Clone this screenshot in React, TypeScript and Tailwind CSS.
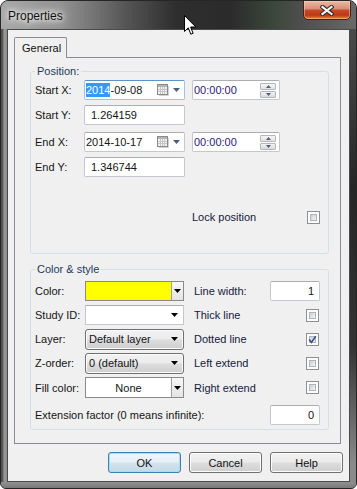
import React from "react";

function Tri({ color = "#000" }: { color?: string }) {
  return (
    <svg width="7" height="4" viewBox="0 0 7 4" className="block">
      <path d="M0 0H7L3.5 4Z" fill={color} />
    </svg>
  );
}

function SmallTri({ up, color = "#4c607a" }: { up?: boolean; color?: string }) {
  return (
    <svg width="5" height="3" viewBox="0 0 5 3" className="block">
      <path d={up ? "M0 3H5L2.5 0Z" : "M0 0H5L2.5 3Z"} fill={color} />
    </svg>
  );
}

function CalIcon() {
  return (
    <svg width="12" height="12" viewBox="0 0 12 12" className="block">
      <path d="M11.5 2V11.5H2" fill="none" stroke="#d2d2d2" />
      <rect x="0.5" y="0.5" width="10" height="10" fill="#f3f3f3" stroke="#8a8a8a" />
      <rect x="1" y="1" width="9" height="2" fill="#b4b4b4" />
      <path d="M3.5 3V10M5.5 3V10M7.5 3V10M1 5.5H10M1 7.5H10" stroke="#c6c6c6" />
    </svg>
  );
}

function CheckBox({ checked }: { checked?: boolean }) {
  return (
    <div className="relative w-[13px] h-[13px] shrink-0 border border-[#8e8f8f] bg-white p-[2px]">
      <div className="w-full h-full border border-[#aeb3b9] bg-[linear-gradient(135deg,#cdd1d6,#f4f4f4)]" />
      {checked && (
        <svg width="13" height="13" viewBox="0 0 13 13" className="absolute left-[-1px] top-[-1px]">
          <path d="M3.2 6.6L5.4 9.4L9.8 3.2" fill="none" stroke="#3b4f8c" strokeWidth="1.6" />
        </svg>
      )}
    </div>
  );
}

function Button({ children, def }: { children: React.ReactNode; def?: boolean }) {
  return (
    <div
      className={
        def
          ? "w-[73px] h-[21px] rounded-[3px] border border-[#3c7fb1] shadow-[inset_0_0_0_1px_#a9dcf6] bg-[linear-gradient(180deg,#f1f7fb_0%,#e6eff5_48%,#d3e3ee_52%,#c6d9e6_100%)] flex items-center justify-center text-[#111]"
          : "w-[73px] h-[21px] rounded-[3px] border border-[#707070] shadow-[inset_0_0_0_1px_#fcfcfc] bg-[linear-gradient(180deg,#f2f2f2_0%,#ebebeb_48%,#dddddd_52%,#cfcfcf_100%)] flex items-center justify-center text-[#111]"
      }
    >
      {children}
    </div>
  );
}

function Spinner() {
  return (
    <div className="w-[16px] h-[15px] flex flex-col gap-[1px] mr-[3px]">
      <div className="flex-1 rounded-[1px] border border-[#b4b7bb] bg-[linear-gradient(180deg,#f6f6f6,#e2e2e2)] flex items-center justify-center">
        <SmallTri up />
      </div>
      <div className="flex-1 rounded-[1px] border border-[#b4b7bb] bg-[linear-gradient(180deg,#f2f2f2,#dadada)] flex items-center justify-center">
        <SmallTri />
      </div>
    </div>
  );
}

const textBox =
  "h-[20px] bg-white border border-[#c3c7ce] border-t-[#abadb3] rounded-[2px] flex items-center";

export default function App() {
  return (
    <div className="w-[357px] h-[489px] relative flex flex-col overflow-hidden rounded-t-[8px] rounded-b-[6px] border border-[#262626] bg-[#7f7f7f] font-['Liberation_Sans',Arial,sans-serif] text-[11px] leading-[14px] text-[#141414]">
      {/* Title bar */}
      <div className="h-[28px] shrink-0 flex items-start bg-[linear-gradient(90deg,#a8a8a8_0px,#939393_60px,#555555_125px,#2e2e2e_175px,#2b2b2b_230px,#3b473b_272px,#4e4e4e_300px,#6a6a6a_357px)]">
        <span className="ml-[7px] mt-[7px] text-[12px] leading-[16px] text-[#111] [text-shadow:0_0_5px_#fff,0_0_9px_#fff,0_0_12px_#ddd]">
          Properties
        </span>
        <div className="ml-auto mr-[5px] -mt-[1px] w-[48px] h-[20px] rounded-b-[5px] border border-[#4a1e14] shadow-[inset_0_0_0_1px_rgba(255,220,200,0.45)] bg-[linear-gradient(180deg,#e9b8a6_0%,#d99178_42%,#c44b2c_52%,#bd3612_78%,#e38a2c_100%)] flex items-center justify-center">
          <svg width="14" height="11" viewBox="0 0 14 11" className="block">
            <path d="M2.5 2L11.5 9M11.5 2L2.5 9" stroke="#3a2a26" strokeWidth="4.2" strokeLinecap="square" />
            <path d="M2.5 2L11.5 9M11.5 2L2.5 9" stroke="#f4f4f4" strokeWidth="2.2" strokeLinecap="square" />
          </svg>
        </div>
      </div>

      {/* Middle */}
      <div className="flex-1 flex">
        <div className="w-[6px] bg-[linear-gradient(90deg,#4a4a4a_0px,#5e5e5e_2px,#9c9c9c_3px,#8a8a8a_6px)]" />
        <div className="w-[343px] border border-[#4b4b4b] bg-[#f0f0f0] flex flex-col">
          <div className="ml-[6px] mt-[7px] w-[327px] flex flex-col">
            {/* Tab header */}
            <div className="relative z-10 w-[53px] h-[21px] -mb-[1px] border border-b-0 border-[#898c95] rounded-t-[2px] bg-[#f0f0f0] flex items-center pl-[7px] text-[#111]">
              General
            </div>
            {/* Tab page */}
            <div className="h-[387px] border border-[#898c95] bg-[#f0f0f0] flex flex-col">
              {/* Position group */}
              <fieldset className="ml-[15px] mt-[6px] w-[299px] h-[190px] border border-[#d5dfe5] rounded-[3px] px-[4px]">
                <legend className="px-[2px] text-[#1e395b]">Position:</legend>
                <div className="mt-[2px] flex items-center h-[20px]">
                  <div className="w-[49px]">Start X:</div>
                  <div className="w-[101px] h-[20px] bg-white border border-[#a4c3e3] border-t-[#5d94c8] rounded-[2px] flex items-center pl-[1px]">
                    <span className="bg-[#3399ff] text-white">2014</span>
                    <span>-09-08</span>
                    <div className="ml-auto mr-[4px] flex items-center gap-[4px]">
                      <CalIcon />
                      <Tri color="#4c607a" />
                    </div>
                  </div>
                  <div className={"ml-[7px] w-[88px] " + textBox}>
                    <span className="pl-[1px] text-[#2d1a7a]">00:00:00</span>
                    <div className="ml-auto">
                      <Spinner />
                    </div>
                  </div>
                </div>
                <div className="mt-[5px] flex items-center h-[20px]">
                  <div className="w-[49px]">Start Y:</div>
                  <div className={"w-[101px] pl-[6px] " + textBox}>1.264159</div>
                </div>
                <div className="mt-[7px] flex items-center h-[20px]">
                  <div className="w-[49px]">End X:</div>
                  <div className={"w-[101px] pl-[1px] " + textBox}>
                    <span>2014-10-17</span>
                    <div className="ml-auto mr-[4px] flex items-center gap-[4px]">
                      <CalIcon />
                      <Tri color="#4c607a" />
                    </div>
                  </div>
                  <div className={"ml-[7px] w-[88px] " + textBox}>
                    <span className="pl-[1px] text-[#2d1a7a]">00:00:00</span>
                    <div className="ml-auto">
                      <Spinner />
                    </div>
                  </div>
                </div>
                <div className="mt-[5px] flex items-center h-[20px]">
                  <div className="w-[49px]">End Y:</div>
                  <div className={"w-[101px] pl-[6px] " + textBox}>1.346744</div>
                </div>
                <div className="mt-[30px] flex items-center h-[20px]">
                  <div className="ml-[157px] w-[115px] text-[#14213d]">Lock position</div>
                  <CheckBox />
                </div>
              </fieldset>

              {/* Color & style group */}
              <fieldset className="ml-[15px] mt-[8px] w-[299px] h-[168px] border border-[#d5dfe5] rounded-[3px] px-[4px]">
                <legend className="px-[2px] text-[#1e395b]">Color &amp; style</legend>
                <div className="mt-[3px] flex flex-col">
                  {/* Row 1 */}
                  <div className="h-[24px] flex items-center pr-[4px]">
                    <div className="w-[50px]">Color:</div>
                    <div className="w-[99px] h-[20px] border border-[#8a8a8a] bg-white flex">
                      <div className="flex-1 bg-[#ffff00]" />
                      <div className="w-[12px] border-l border-[#a0a0a0] bg-[linear-gradient(180deg,#f7f7f7,#e4e4e4)] flex items-center justify-center">
                        <Tri />
                      </div>
                    </div>
                    <div className="ml-[10px] flex-1 text-[#14213d]">Line width:</div>
                    <div className={"w-[50px] justify-end pr-[5px] " + textBox}>1</div>
                  </div>
                  {/* Row 2 */}
                  <div className="h-[24px] flex items-center pr-[4px]">
                    <div className="w-[50px]">Study ID:</div>
                    <div className="w-[99px] h-[20px] border border-[#c3c7ce] border-t-[#abadb3] bg-white flex items-center justify-end pr-[5px]">
                      <Tri />
                    </div>
                    <div className="ml-[10px] flex-1 text-[#14213d]">Thick line</div>
                    <div className="mr-[1px]">
                      <CheckBox />
                    </div>
                  </div>
                  {/* Row 3 */}
                  <div className="h-[24px] flex items-center pr-[4px]">
                    <div className="w-[50px]">Layer:</div>
                    <div className="w-[99px] h-[21px] rounded-[3px] border border-[#707070] shadow-[inset_0_0_0_1px_#fbfbfb] bg-[linear-gradient(180deg,#f2f2f2_0%,#ebebeb_48%,#dddddd_52%,#cfcfcf_100%)] flex items-center pl-[3px] pr-[5px]">
                      <span className="flex-1">Default layer</span>
                      <Tri />
                    </div>
                    <div className="ml-[10px] flex-1 text-[#14213d]">Dotted line</div>
                    <div className="mr-[1px]">
                      <CheckBox checked />
                    </div>
                  </div>
                  {/* Row 4 */}
                  <div className="h-[24px] flex items-center pr-[4px]">
                    <div className="w-[50px]">Z-order:</div>
                    <div className="w-[99px] h-[21px] rounded-[3px] border border-[#707070] shadow-[inset_0_0_0_1px_#fbfbfb] bg-[linear-gradient(180deg,#f2f2f2_0%,#ebebeb_48%,#dddddd_52%,#cfcfcf_100%)] flex items-center pl-[3px] pr-[5px]">
                      <span className="flex-1">0 (default)</span>
                      <Tri />
                    </div>
                    <div className="ml-[10px] flex-1 text-[#14213d]">Left extend</div>
                    <div className="mr-[1px]">
                      <CheckBox />
                    </div>
                  </div>
                  {/* Row 5 */}
                  <div className="h-[25px] flex items-center pr-[4px]">
                    <div className="w-[50px]">Fill color:</div>
                    <div className="w-[99px] h-[21px] border border-[#8a8a8a] bg-white flex">
                      <div className="flex-1 flex items-center justify-center">None</div>
                      <div className="w-[12px] border-l border-[#a0a0a0] bg-[linear-gradient(180deg,#f7f7f7,#e4e4e4)] flex items-center justify-center">
                        <Tri />
                      </div>
                    </div>
                    <div className="ml-[10px] flex-1 text-[#14213d]">Right extend</div>
                    <div className="mr-[1px]">
                      <CheckBox />
                    </div>
                  </div>
                  {/* Extension */}
                  <div className="mt-[5px] h-[20px] flex items-center pr-[4px]">
                    <div className="flex-1">Extension factor (0 means infinite):</div>
                    <div className={"w-[50px] justify-end pr-[5px] " + textBox}>0</div>
                  </div>
                </div>
              </fieldset>
            </div>
          </div>

          {/* Buttons */}
          <div className="mt-[8px] flex justify-end gap-[8px] pr-[6px]">
            <Button def>OK</Button>
            <Button>Cancel</Button>
            <Button>Help</Button>
          </div>
        </div>
        <div className="w-[6px] bg-[linear-gradient(180deg,#4a4a4a_0%,#262626_35%,#333333_70%,#8a8a8a_96%)]" />
      </div>
      <div className="h-[6px] shrink-0 bg-[linear-gradient(180deg,#909090,#7a7a7a)]" />

      {/* Mouse cursor */}
      <svg width="13" height="21" viewBox="0 0 13 21" className="absolute left-[183px] top-[14px]">
        <path
          d="M0.5 0.5V16.5L4.3 12.8L6.8 19.2L9.1 18.3L6.6 12H11.8Z"
          fill="#fff"
          stroke="#000"
          strokeWidth="1"
          strokeLinejoin="miter"
        />
      </svg>
    </div>
  );
}
